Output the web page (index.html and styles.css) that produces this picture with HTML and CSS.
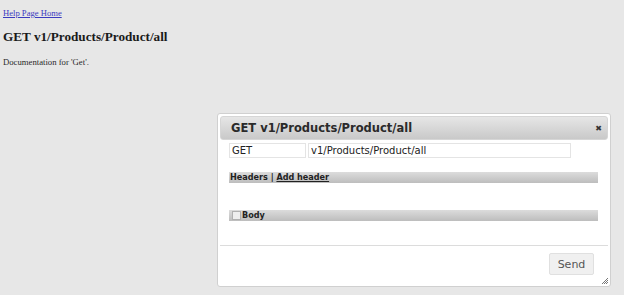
FILE: index.html
```html
<!DOCTYPE html>
<html>
<head>
<meta charset="utf-8">
<title>GET v1/Products/Product/all</title>
<link rel="stylesheet" href="styles.css">
</head>
<body>
<div class="page">
  <a class="home" href="#">Help Page Home</a>
  <h1 class="heading">GET v1/Products/Product/all</h1>
  <p class="doc">Documentation for 'Get'.</p>
</div>

<div class="dialog">
  <div class="titlebar">
    <span class="title">GET v1/Products/Product/all</span>
    <span class="close">&#x2716;</span>
  </div>
  <div class="content">
    <div class="request-row">
      <input class="method" type="text" value="GET">
      <input class="url" type="text" value="v1/Products/Product/all">
    </div>
    <div class="bar headers-bar"><span>Headers</span> | <a href="#">Add header</a></div>
    <div class="bar body-bar"><span class="check"></span><span>Body</span></div>
  </div>
  <div class="buttonpane">
    <button class="send" type="button">Send</button>
  </div>
  <svg class="grip" width="8" height="8" viewBox="0 0 8 8">
    <path d="M7 1 L1 7 M7 3 L3 7 M7 5 L5 7" stroke="#777" stroke-width="1"/>
  </svg>
</div>
</body>
</html>
```

FILE: styles.css
```css
html, body {
  margin: 0;
  padding: 0;
}
body {
  background: #e7e7e7;
  width: 624px;
  height: 295px;
  overflow: hidden;
  position: relative;
  font-family: "Liberation Serif", "Times New Roman", serif;
  color: #222;
}
.page {
  padding: 8px 3px 0 3px;
}
.home {
  display: block;
  font-size: 8.6px;
  line-height: 11px;
  color: #3b3bc0;
}
.heading {
  margin: 10px 0 0 0;
  font-size: 13.2px;
  line-height: 16px;
  font-weight: bold;
  color: #1a1a1a;
}
.doc {
  margin: 12px 0 0 0;
  font-size: 8.7px;
  line-height: 11px;
  color: #2a2a2a;
}

.dialog {
  position: absolute;
  left: 217px;
  top: 113px;
  width: 388px;
  height: 168px;
  border: 1px solid #d0d0d0;
  border-radius: 3px;
  background: #fff;
  padding: 2px;
  display: flex;
  flex-direction: column;
  font-family: "DejaVu Sans", Verdana, sans-serif;
}
.titlebar {
  height: 24px;
  flex: none;
  border-radius: 3px;
  background: linear-gradient(#e6e6e6, #c9c9c9);
  border: 1px solid #d6d6d6;
  box-sizing: border-box;
  display: flex;
  align-items: center;
  justify-content: space-between;
  padding: 0 5px 0 10px;
}
.title {
  font-size: 11.5px;
  font-weight: bold;
  color: #2a2a2a;
}
.close {
  font-size: 8px;
  color: #333;
}
.content {
  flex: 1;
  padding: 3px 10px 0 9px;
}
.request-row {
  display: flex;
  gap: 2px;
}
.request-row input {
  font-family: "DejaVu Sans", Verdana, sans-serif;
  font-size: 10px;
  color: #222;
  height: 15px;
  box-sizing: border-box;
  border: 1px solid #e4e4e4;
  padding: 0 2px;
  margin: 0;
  outline: none;
  background: #fff;
}
.method {
  width: 77px;
}
.url {
  width: 263px;
}
.bar {
  height: 11px;
  margin-top: 14px;
  background: linear-gradient(#dcdcdc, #bdbdbd);
  font-size: 8.1px;
  font-weight: bold;
  line-height: 11px;
  color: #222;
  padding-left: 1px;
  display: flex;
  align-items: center;
  white-space: pre;
}
.headers-bar a {
  color: #222;
}
.body-bar {
  margin-top: 27px;
}
.check {
  width: 7px;
  height: 7px;
  border: 1px solid #b0b0b0;
  background: #eee;
  margin: 0 1px 0 2px;
}
.buttonpane {
  flex: none;
  border-top: 1px solid #dcdcdc;
  height: 39px;
  display: flex;
  justify-content: flex-end;
  align-items: flex-start;
  padding: 7px 14px 0 0;
  box-sizing: border-box;
}
.send {
  width: 45px;
  height: 22px;
  border: 1px solid #e0e0e0;
  border-radius: 2px;
  background: #f0f0f0;
  font-family: "DejaVu Sans", Verdana, sans-serif;
  font-size: 11px;
  color: #555;
  padding: 0;
}
.grip {
  position: absolute;
  right: 1px;
  bottom: 1px;
}
```
